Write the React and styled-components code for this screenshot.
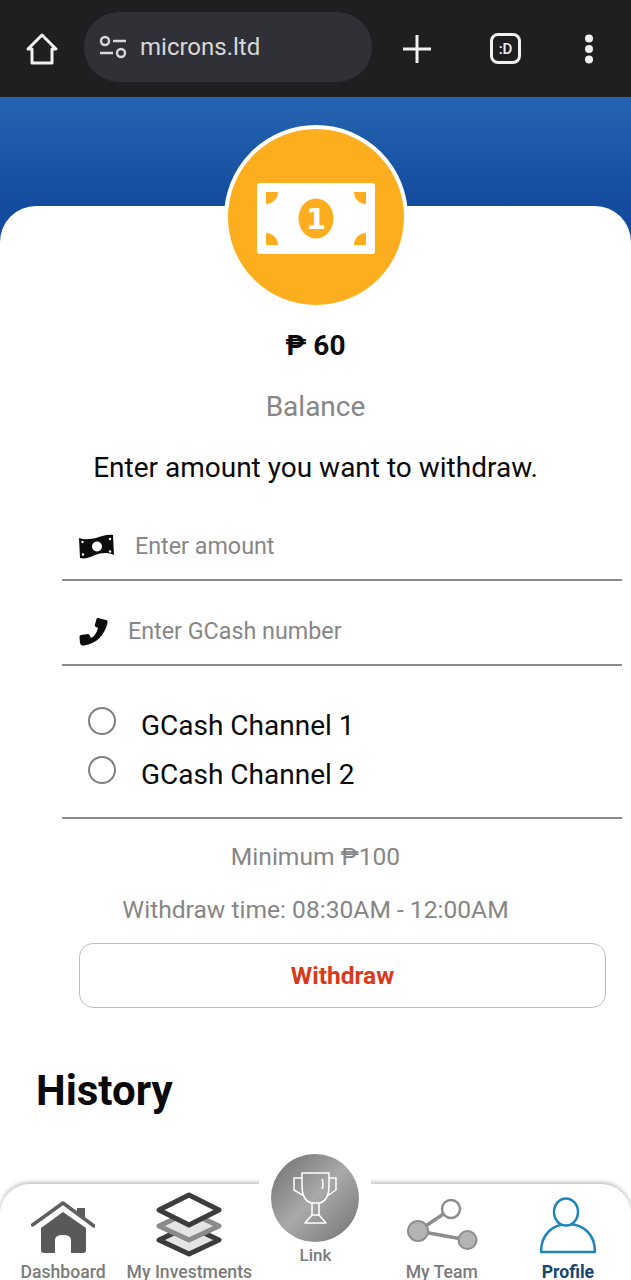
import React from "react";
import styled, { createGlobalStyle } from "styled-components";

const Global = createGlobalStyle`
  html, body { margin: 0; padding: 0; background: #fff; }
  * { box-sizing: border-box; }
  body { font-family: Roboto, "Noto Sans", "DejaVu Sans", sans-serif; }
`;

const Page = styled.div`
  width: 631px;
  height: 1280px;
  overflow: hidden;
  display: flex;
  flex-direction: column;
`;

/* Browser chrome */
const TopBar = styled.header`
  height: 97px;
  flex: none;
  background: #1f1e20;
  display: flex;
  align-items: center;
  padding: 0 0 0 26px;
  color: #f0f0f0;
`;
const AddressPill = styled.div`
  width: 288px;
  height: 70px;
  margin: -4px 31px 0 26px;
  border-radius: 35px;
  background: #303136;
  display: flex;
  align-items: center;
  padding-left: 15px;
  gap: 13px;
  font-size: 24px;
  color: #d9d9d9;
`;
const TabCount = styled.div`
  width: 31px;
  height: 31px;
  margin: 0 63px 0 59px;
  border: 3px solid #f0f0f0;
  border-radius: 8px;
  display: flex;
  align-items: center;
  justify-content: center;
  font-size: 15px;
  font-weight: 500;
`;

/* Blue header and the coin badge that overlaps the card */
const Hero = styled.div`
  height: 145px;
  flex: none;
  background: linear-gradient(180deg, #2564b1 0, #134b9e 109px, #134b9e 100%);
  display: flex;
  justify-content: center;
`;
const Badge = styled.div`
  position: relative;
  z-index: 1;
  width: 184px;
  height: 184px;
  margin-top: 28px;
  border-radius: 50%;
  background: #fdae1f;
  border: 4px solid #fff;
  display: flex;
  align-items: center;
  justify-content: center;
  padding-top: 2px;
`;
const Card = styled.main`
  position: relative;
  flex: 1;
  min-height: 0;
  margin-top: -36px;
  background: #fff;
  border-radius: 36px 36px 0 0;
  padding-top: 122px;
  display: flex;
  flex-direction: column;
`;
const Amount = styled.div`
  font-size: 28px;
  font-weight: 700;
  line-height: 36px;
  text-align: center;
  color: #0a0a0a;
`;
const Muted = styled.div`
  line-height: 36px;
  text-align: center;
  color: #868686;
  font-size: ${(p) => p.$size}px;
  margin-top: ${(p) => p.$top}px;
`;
const Prompt = styled.div`
  margin-top: 25px;
  font-size: 28px;
  line-height: 36px;
  text-align: center;
  color: #0a0a0a;
`;

/* Form */
const Form = styled.form`
  margin: 10px 9px 0 62px;
`;
const Field = styled.label`
  height: 85px;
  padding: 17px 0 0 17px;
  display: flex;
  align-items: center;
  gap: ${(p) => p.$gap}px;
  border-bottom: 2px solid #8a8a8a;
`;
const FieldInput = styled.input`
  flex: 1;
  min-width: 0;
  border: 0;
  outline: 0;
  padding: 0;
  background: transparent;
  font: 400 23.3px Roboto, sans-serif;
  &::placeholder { color: #868686; opacity: 1; }
`;
const Channels = styled.div`
  padding: 35px 0 18px 26px;
  border-bottom: 2px solid #8a8a8a;
`;
const Channel = styled.label`
  height: 49px;
  display: flex;
  align-items: center;
  gap: 25px;
  font-size: 28px;
  color: #0a0a0a;
`;
const Radio = styled.input.attrs({ type: "radio", name: "channel" })`
  appearance: none;
  flex: none;
  width: 28px;
  height: 28px;
  margin: -10px 0 0;
  border: 2px solid #808080;
  border-radius: 50%;
  background: #fff;
`;
const WithdrawButton = styled.button`
  display: block;
  width: 527px;
  height: 65px;
  margin: 15px 0 0 79px;
  border: 1px solid #bdbdbd;
  border-radius: 14px;
  background: #fff;
  color: #d93a1a;
  font: 700 24.5px Roboto, sans-serif;
  flex: none;
`;
const History = styled.h2`
  margin: 59px 0 0 36px;
  font-size: 42px;
  line-height: 48px;
  font-weight: 700;
  color: #0a0a0a;
`;

/* Bottom navigation */
const Nav = styled.nav`
  position: relative;
  flex: none;
  height: 96px;
  background: #fff;
  border-radius: 30px 30px 0 0;
  box-shadow: 0 -2px 4px rgba(0, 0, 0, 0.25);
  display: grid;
  grid-template-columns: repeat(5, 1fr);
`;
const NavItem = styled.a`
  display: flex;
  flex-direction: column;
  align-items: center;
  min-width: 0;
  height: 96px;
  font-size: 17.6px;
  line-height: 20px;
  white-space: nowrap;
  color: ${(p) => (p.$active ? "#15466f" : "#7b7b7b")};
  font-weight: ${(p) => (p.$active ? 700 : 500)};
`;
const NavIcon = styled.span`
  height: 78px;
  display: flex;
  align-items: flex-start;
  justify-content: center;
`;
const CenterItem = styled(NavItem)`
  position: relative;
  margin-top: -30px;
  height: auto;
  font-size: 17px;
`;
const Trophy = styled.span`
  width: 88px;
  height: 88px;
  margin-bottom: 3px;
  border-radius: 50%;
  background: linear-gradient(135deg, #6e6e6e 0%, #a9a9a9 50%, #727272 100%);
  box-shadow: 0 0 0 14px #fff;
  display: flex;
  align-items: center;
  justify-content: center;
`;
const LinkLabel = styled.span`
  position: relative;
`;

const HomeOutline = () => (
  <svg width="32" height="32" viewBox="0 0 32 32" fill="none" stroke="#f0f0f0" strokeWidth="3" strokeLinejoin="round" strokeLinecap="round">
    <path d="M16 2 L30 16 H26 V30 H6 V16 H2 Z" />
  </svg>
);
const TuneGlyph = () => (
  <svg width="28" height="24" viewBox="0 0 28 24" fill="none" stroke="#d9d9d9" strokeWidth="2.4">
    <circle cx="6" cy="6" r="4" />
    <path d="M14 6 H27 M1 18 H14" />
    <circle cx="22" cy="18" r="4" />
  </svg>
);
const Plus = () => (
  <svg width="28" height="28" viewBox="0 0 28 28" stroke="#f0f0f0" strokeWidth="3">
    <path d="M14 0 V28 M0 14 H28" />
  </svg>
);
const Dots = () => (
  <svg width="10" height="30" viewBox="0 0 10 30" fill="#f0f0f0">
    <circle cx="5" cy="4.5" r="4" />
    <circle cx="5" cy="15" r="4" />
    <circle cx="5" cy="25.5" r="4" />
  </svg>
);
const Banknote = () => (
  <svg width="118" height="71" viewBox="0 0 118 71">
    <rect width="118" height="71" rx="3" fill="#fff" />
    <path d="M9 9 H21 A12 12 0 0 1 9 21 Z M109 9 H97 A12 12 0 0 0 109 21 Z M9 62 H21 A12 12 0 0 0 9 50 Z M109 62 H97 A12 12 0 0 1 109 50 Z" fill="#fdae1f" />
    <ellipse cx="59" cy="35.500" rx="17.500" ry="20" fill="#fdae1f" />
    <text x="59" y="46" textAnchor="middle" fontFamily="DejaVu Sans, sans-serif" fontWeight="700" fontSize="29" fill="#fff">1</text>
  </svg>
);
const CashIcon = () => (
  <svg width="35" height="25" viewBox="0 0 35 25">
    <path d="M0 4 C6 6 12 5 17 4 C23 2 29 0 34 1 L35 21 C28 18 22 19 16 21 C10 24 5 25 1 24 Z" fill="#0c0c0c" />
    <circle cx="18" cy="12.500" r="5" fill="#fff" />
    <circle cx="3.500" cy="8" r="1.200" fill="#fff" />
    <circle cx="31" cy="5" r="1.200" fill="#fff" />
    <circle cx="4" cy="20.500" r="1.200" fill="#fff" />
    <circle cx="31" cy="17.500" r="1.200" fill="#fff" />
  </svg>
);
const PhoneIcon = () => (
  <svg width="29" height="29" viewBox="0 0 29 29">
    <path d="M19 1 L27 3 C28 3 29 4 28.500 6 C26 18 17 27 5 28.500 C3 29 1.500 28 1 26 L0.500 20 C0.500 19 1 18 2 18 L9 17 C10 17 10.500 18 11 19 L12 21 C16 19 18 15 19 11 L17 10 C16 9.500 15.500 8.500 16 7.500 L17.500 2 C17.500 1 18 1 19 1 Z" fill="#0c0c0c" />
  </svg>
);
const HouseIcon = () => (
  <svg width="64" height="78" viewBox="0 0 64 78">
    <path d="M46 24 H54 V36 L46 30 Z" fill="#5c5c5c" />
    <path d="M1.500 41 L32 19 L63 42" fill="none" stroke="#5f5f5f" strokeWidth="3.500" strokeLinecap="round" strokeLinejoin="round" />
    <path d="M32 28 L55 44 V66 Q55 69 52 69 H40 V56 Q40 51 32 51 Q24 51 24 56 V69 H13 Q10 69 10 66 V44 Z" fill="#595959" />
  </svg>
);
const LayersIcon = () => (
  <svg width="66" height="78" viewBox="0 0 66 78" fill="none" strokeLinejoin="round">
    <path d="M33 42 L63 56 L33 70 L3 56 Z" fill="#e4e4e4" stroke="#3c3c3c" strokeWidth="5" />
    <path d="M33 28 L63 42 L33 56 L3 42 Z" fill="#e4e4e4" stroke="#8a8a8a" strokeWidth="5" />
    <path d="M33 11 L63 26 L33 41 L3 26 Z" fill="#fff" stroke="#3c3c3c" strokeWidth="5" />
  </svg>
);
const TrophyGlyph = () => (
  <svg width="46" height="52" viewBox="0 0 46 52" fill="none" stroke="#fff" strokeWidth="1.500" strokeLinejoin="round">
    <path d="M10 1 H37 V14 Q37 28 28 31 H19 Q10 28 10 14 Z" />
    <path d="M10 6 H2 V18 L12 24 M37 6 H44 V18 L35 24" />
    <path d="M20 31 V43 M27 31 V43" />
    <path d="M20 43 H27 L34 51 H13 Z" />
    <path d="M30 7 Q32 12 30 17" />
  </svg>
);
const ShareIcon = () => (
  <svg width="74" height="78" viewBox="0 0 74 78">
    <path d="M46 25 L13 47 L62.500 56" fill="none" stroke="#8d8d8d" strokeWidth="3.500" />
    <circle cx="46" cy="25" r="9" fill="#fff" stroke="#8d8d8d" strokeWidth="2.500" />
    <circle cx="13" cy="47" r="10" fill="#b4b4b4" stroke="#8d8d8d" strokeWidth="2" />
    <circle cx="62.500" cy="56" r="9" fill="#b4b4b4" stroke="#8d8d8d" strokeWidth="2" />
  </svg>
);
const UserIcon = () => (
  <svg width="58" height="78" viewBox="0 0 58 78" fill="none" stroke="#1f86ba" strokeWidth="2.500" strokeLinejoin="round">
    <path d="M2 68 C2 50 14 40 29 40 C44 40 56 50 56 68 Z" />
    <ellipse cx="27" cy="28" rx="12" ry="13.500" fill="#fff" />
  </svg>
);

export default function App() {
  return (
    <Page>
      <Global />
      <TopBar>
        <HomeOutline />
        <AddressPill>
          <TuneGlyph />
          microns.ltd
        </AddressPill>
        <Plus />
        <TabCount>:D</TabCount>
        <Dots />
      </TopBar>
      <Hero>
        <Badge>
          <Banknote />
        </Badge>
      </Hero>
      <Card>
        <Amount>₱ 60</Amount>
        <Muted $size={28} $top={25}>Balance</Muted>
        <Prompt>Enter amount you want to withdraw.</Prompt>
        <Form>
          <Field $gap={21}>
            <CashIcon />
            <FieldInput placeholder="Enter amount" />
          </Field>
          <Field $gap={20}>
            <PhoneIcon />
            <FieldInput placeholder="Enter GCash number" />
          </Field>
          <Channels>
            <Channel><Radio />GCash Channel 1</Channel>
            <Channel><Radio />GCash Channel 2</Channel>
          </Channels>
        </Form>
        <Muted $size={24.6} $top={20}>Minimum ₱100</Muted>
        <Muted $size={24.6} $top={17}>Withdraw time: 08:30AM - 12:00AM</Muted>
        <WithdrawButton type="button">Withdraw</WithdrawButton>
        <History>History</History>
      </Card>
      <Nav>
        <NavItem><NavIcon><HouseIcon /></NavIcon>Dashboard</NavItem>
        <NavItem><NavIcon><LayersIcon /></NavIcon>My Investments</NavItem>
        <CenterItem><Trophy><TrophyGlyph /></Trophy><LinkLabel>Link</LinkLabel></CenterItem>
        <NavItem><NavIcon><ShareIcon /></NavIcon>My Team</NavItem>
        <NavItem $active><NavIcon><UserIcon /></NavIcon>Profile</NavItem>
      </Nav>
    </Page>
  );
}
